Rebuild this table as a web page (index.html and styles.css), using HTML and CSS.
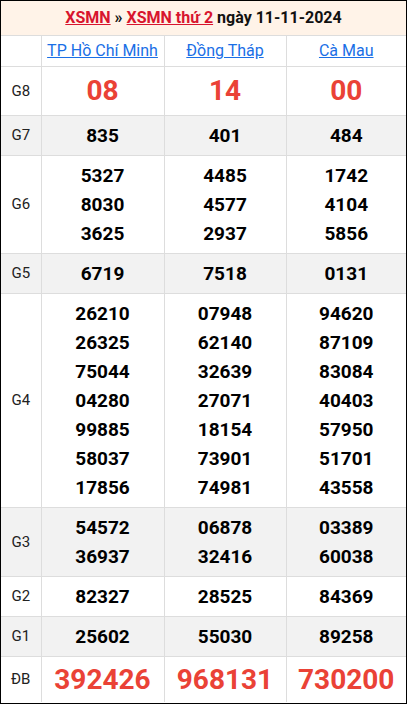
FILE: index.html
```html
<!DOCTYPE html>
<html lang="vi">
<head>
<meta charset="utf-8">
<link rel="stylesheet" href="styles.css">
</head>
<body>
<div class="box">
  <div class="title"><a href="#">XSMN</a> » <a href="#">XSMN thứ 2</a> ngày 11-11-2024</div>
  <table class="kq">
    <colgroup><col class="c0"><col class="c1"><col class="c2"><col class="c3"></colgroup>
    <tr class="prov"><th></th><th><a href="#">TP Hồ Chí Minh</a></th><th><a href="#">Đồng Tháp</a></th><th><a href="#">Cà Mau</a></th></tr>
    <tr class="big"><td class="lbl">G8</td><td>08</td><td>14</td><td>00</td></tr>
    <tr class="alt"><td class="lbl">G7</td><td>835</td><td>401</td><td>484</td></tr>
    <tr><td class="lbl">G6</td><td>5327<br>8030<br>3625</td><td>4485<br>4577<br>2937</td><td>1742<br>4104<br>5856</td></tr>
    <tr class="alt"><td class="lbl">G5</td><td>6719</td><td>7518</td><td>0131</td></tr>
    <tr><td class="lbl">G4</td><td>26210<br>26325<br>75044<br>04280<br>99885<br>58037<br>17856</td><td>07948<br>62140<br>32639<br>27071<br>18154<br>73901<br>74981</td><td>94620<br>87109<br>83084<br>40403<br>57950<br>51701<br>43558</td></tr>
    <tr class="alt"><td class="lbl">G3</td><td>54572<br>36937</td><td>06878<br>32416</td><td>03389<br>60038</td></tr>
    <tr><td class="lbl">G2</td><td>82327</td><td>28525</td><td>84369</td></tr>
    <tr class="alt"><td class="lbl">G1</td><td>25602</td><td>55030</td><td>89258</td></tr>
    <tr class="db"><td class="lbl">ĐB</td><td>392426</td><td>968131</td><td>730200</td></tr>
  </table>
</div>
</body>
</html>
```
FILE: styles.css
```css
html, body { margin: 0; padding: 0; background: #fff; }
body { font-family: Roboto, "Noto Sans", Arial, sans-serif; color: #000; }
.box { width: 405px; height: 702px; border: 1px solid #000; overflow: hidden; }
.title {
  height: 34px; line-height: 34px; background: #fff3e8; text-align: center;
  font-weight: bold; font-size: 16px; color: #111; border-bottom: 1px solid #ddd;
}
.title a { color: #d8152e; text-decoration: underline; }
.kq { width: 405px; border-collapse: collapse; table-layout: fixed; }
.c0 { width: 40px; } .c1 { width: 123px; } .c2 { width: 122px; } .c3 { width: 120px; }
.kq td, .kq th {
  border-left: 1px solid #ddd; border-top: 1px solid #ddd; text-align: center;
  padding: 5px 0; font-weight: bold; font-size: 19px; line-height: 29px; vertical-align: middle;
}
.kq tr:first-child th { border-top: none; }
.kq td:first-child, .kq th:first-child { border-left: none; }
.prov th { font-weight: normal; font-size: 16px; line-height: 20px; padding: 5px 0; height: 20px; }
.prov a { color: #1a6fe6; text-decoration: underline; }
.big td { font-size: 28px; line-height: 38px; color: #ea4236; }
.db td { font-size: 28px; line-height: 35px; color: #ea4236; }
.alt td { background: #f2f2f2; }
.kq td.lbl { font-weight: normal; font-size: 15px; line-height: 29px; color: #222; }
```
